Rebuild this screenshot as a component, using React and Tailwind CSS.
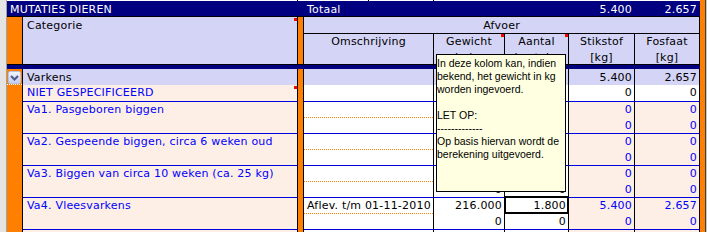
import React from "react";

function Marker({ top = "top-px" }) {
  return <div className={`absolute right-0 ${top} h-[3px] w-[3px] bg-[#ff0000]`} />;
}

function Chevron() {
  return (
    <div className="ml-px mt-[2px] flex h-[13px] w-[13px] items-center justify-center rounded-[2px] border border-[#b4c2e4] bg-gradient-to-b from-[#f0f4fd] to-[#c2cef0]">
      <svg width="9" height="6" viewBox="0 0 9 6">
        <path d="M1 1 L4.5 4.5 L8 1" fill="none" stroke="#4a5b8c" strokeWidth="2" />
      </svg>
    </div>
  );
}

function NumCell({ w, bg, color, vals, extra }) {
  return (
    <div
      className={`relative flex ${w} shrink-0 flex-col border-r border-b border-r-black border-b-[#0000dd] ${bg} ${color} text-right`}
    >
      <div className="h-[16px] pr-[2px]">{vals[0]}</div>
      <div className="h-[15px] pr-[2px]">{vals[1]}</div>
      {extra}
    </div>
  );
}

function VaRow({ label, omschr = "", gew = ["", ""], aan = ["", ""], stik = ["0", "0"], fos = ["0", "0"], selected = false }) {
  return (
    <div className="flex h-[32px] shrink-0">
      <div className="w-[16px] shrink-0 border-r border-black bg-[#ff8000]" />
      <div className="w-[275px] shrink-0 border-r border-b border-r-black border-b-[#0000dd] bg-[#fdefe5] pl-[4px] text-[#0000ff]">
        {label}
      </div>
      <div className="w-[6px] shrink-0 border-r border-black bg-[#ff8000]" />
      <div className="flex w-[130px] shrink-0 flex-col border-r border-b border-r-black border-b-[#0000dd] bg-white">
        <div className="h-[16px] border-b border-dotted border-[#ff8000] pl-[3px]">{omschr}</div>
        <div className="h-[15px]" />
      </div>
      <NumCell w="w-[71px]" bg="bg-white" color="text-black" vals={gew} />
      <NumCell
        w="w-[64px]"
        bg="bg-white"
        color="text-black"
        vals={aan}
        extra={
          selected ? (
            <div className="absolute -left-px -top-[2px] h-[18px] w-[65px] border-2 border-black" />
          ) : null
        }
      />
      <NumCell w="w-[66px]" bg="bg-[#fdefe5]" color="text-[#0000ff]" vals={stik} />
      <NumCell w="w-[65px]" bg="bg-[#fdefe5]" color="text-[#0000ff]" vals={fos} />
    </div>
  );
}

function HeadCell({ w, lines, marker }) {
  return (
    <div className={`relative ${w} shrink-0 border-r border-black text-center`}>
      {lines.map((l, i) => (
        <div key={i}>{l}</div>
      ))}
      {marker ? <Marker top="top-0" /> : null}
    </div>
  );
}

export default function App() {
  return (
    <div className="relative flex h-[232px] w-[707px] overflow-hidden bg-white font-['DejaVu_Sans',sans-serif] text-[11px] leading-[16px] tracking-[0.2px] text-black">
      <div className="w-[7px] shrink-0 border-r border-[#a0a0a0] bg-[#e4e4e4]" />
      <div className="flex w-[693px] shrink-0 flex-col">
        {/* top strip */}
        <div className="flex h-px shrink-0 bg-white">
          <div className="w-[291px] border-r border-black" />
          <div className="w-[71px] border-r border-black" />
          <div className="w-[65px] border-r border-black" />
        </div>
        {/* navy header */}
        <div className="flex h-[16px] shrink-0 border-b border-black bg-[#000080] text-white">
          <div className="w-[297px] shrink-0 pl-[3px] pt-px">MUTATIES DIEREN</div>
          <div className="w-[265px] shrink-0 pl-[3px] pt-px">Totaal</div>
          <div className="w-[66px] shrink-0 pr-[3px] pt-px text-right">5.400</div>
          <div className="w-[65px] shrink-0 pr-[3px] pt-px text-right">2.657</div>
        </div>
        {/* lavender header */}
        <div className="flex h-[47px] shrink-0">
          <div className="w-[16px] shrink-0 border-r border-black bg-[#ff8000]" />
          <div className="relative w-[275px] shrink-0 border-r border-black bg-[#d4d4f7] pl-[4px] pt-px">
            Categorie
            <Marker />
          </div>
          <div className="w-[6px] shrink-0 border-r border-black bg-[#ff8000]" />
          <div className="flex w-[396px] shrink-0 flex-col bg-[#d4d4f7]">
            <div className="h-[17px] shrink-0 border-r border-b border-black pt-px text-center">Afvoer</div>
            <div className="flex flex-1">
              <HeadCell w="w-[130px]" lines={["Omschrijving"]} />
              <HeadCell w="w-[71px]" lines={["Gewicht", "in kg"]} marker />
              <HeadCell w="w-[64px]" lines={["Aantal", "in stuks"]} marker />
              <HeadCell w="w-[66px]" lines={["Stikstof", "[kg]"]} />
              <HeadCell w="w-[65px]" lines={["Fosfaat", "[kg]"]} />
            </div>
          </div>
        </div>
        {/* navy separator */}
        <div className="h-[5px] shrink-0 border-t border-black bg-[#000080]" />
        {/* Varkens */}
        <div className="flex h-[16px] shrink-0">
          <div className="flex w-[16px] shrink-0 flex-col border-r border-black bg-[#ff8000]">
            <div className="h-[15px]">
              <Chevron />
            </div>
            <div className="h-px border-t border-dotted border-white" />
          </div>
          <div className="w-[275px] shrink-0 border-r border-black bg-[#d4d4f7] pl-[4px] pt-px">Varkens</div>
          <div className="w-[6px] shrink-0 border-r border-black bg-[#ff8000]" />
          <div className="w-[130px] shrink-0 border-r border-black bg-[#d4d4f7]" />
          <div className="w-[71px] shrink-0 border-r border-black bg-[#d4d4f7]" />
          <div className="w-[64px] shrink-0 border-r border-black bg-[#d4d4f7]" />
          <div className="w-[66px] shrink-0 border-r border-black bg-[#d4d4f7] pr-[2px] pt-px text-right">5.400</div>
          <div className="w-[65px] shrink-0 border-r border-black bg-[#d4d4f7] pr-[2px] pt-px text-right">2.657</div>
        </div>
        {/* NIET GESPECIFICEERD */}
        <div className="flex h-[17px] shrink-0">
          <div className="w-[16px] shrink-0 border-r border-black bg-[#ff8000]" />
          <div className="relative w-[275px] shrink-0 border-r border-b border-r-black border-b-[#0000dd] bg-[#fdefe5] pl-[4px] text-[#0000ff]">
            NIET GESPECIFICEERD
            <Marker />
          </div>
          <div className="w-[6px] shrink-0 border-r border-black bg-[#ff8000]" />
          <div className="w-[130px] shrink-0 border-r border-b border-r-black border-b-[#0000dd] bg-white" />
          <div className="w-[71px] shrink-0 border-r border-b border-r-black border-b-[#0000dd] bg-white" />
          <div className="w-[64px] shrink-0 border-r border-b border-r-black border-b-[#0000dd] bg-white" />
          <div className="w-[66px] shrink-0 border-r border-b border-r-black border-b-[#0000dd] bg-white pr-[2px] text-right">0</div>
          <div className="w-[65px] shrink-0 border-r border-b border-r-black border-b-[#0000dd] bg-white pr-[2px] text-right">0</div>
        </div>
        <VaRow label="Va1. Pasgeboren biggen" />
        <VaRow label="Va2. Gespeende biggen, circa 6 weken oud" />
        <VaRow label="Va3. Biggen van circa 10 weken (ca. 25 kg)" gew={["", "0"]} aan={["", "0"]} />
        <VaRow
          label="Va4. Vleesvarkens"
          omschr="Aflev. t/m 01-11-2010"
          gew={["216.000", "0"]}
          aan={["1.800", "0"]}
          stik={["5.400", "0"]}
          fos={["2.657", "0"]}
          selected
        />
        {/* last partial row */}
        <div className="flex h-[2px] shrink-0">
          <div className="w-[16px] shrink-0 border-r border-black bg-[#ff8000]" />
          <div className="w-[275px] shrink-0 border-r border-black bg-[#fdefe5]" />
          <div className="w-[6px] shrink-0 border-r border-black bg-[#ff8000]" />
          <div className="w-[130px] shrink-0 border-r border-black bg-white" />
          <div className="w-[71px] shrink-0 border-r border-black bg-white" />
          <div className="w-[64px] shrink-0 border-r border-black bg-white" />
          <div className="w-[66px] shrink-0 border-r border-black bg-[#fdefe5]" />
          <div className="w-[65px] shrink-0 border-r border-black bg-[#fdefe5]" />
        </div>
      </div>
      <div className="w-[5px] shrink-0 bg-[#ff8000]" />
      <div className="w-[2px] shrink-0 border-l border-[#404040] bg-[#c8c8c8]" />

      {/* tooltip */}
      <div className="absolute left-[436px] top-[54px] h-[138px] w-[130px] border border-black bg-[#ffffe1] pt-[2px] font-['Liberation_Sans',sans-serif] text-[10.5px] leading-[13px] tracking-normal whitespace-nowrap text-black">
        <div>In deze kolom kan, indien</div>
        <div>bekend, het gewicht in kg</div>
        <div>worden ingevoerd.</div>
        <div className="h-[13px]" />
        <div>LET OP:</div>
        <div>-------------</div>
        <div>Op basis hiervan wordt de</div>
        <div>berekening uitgevoerd.</div>
      </div>
    </div>
  );
}
